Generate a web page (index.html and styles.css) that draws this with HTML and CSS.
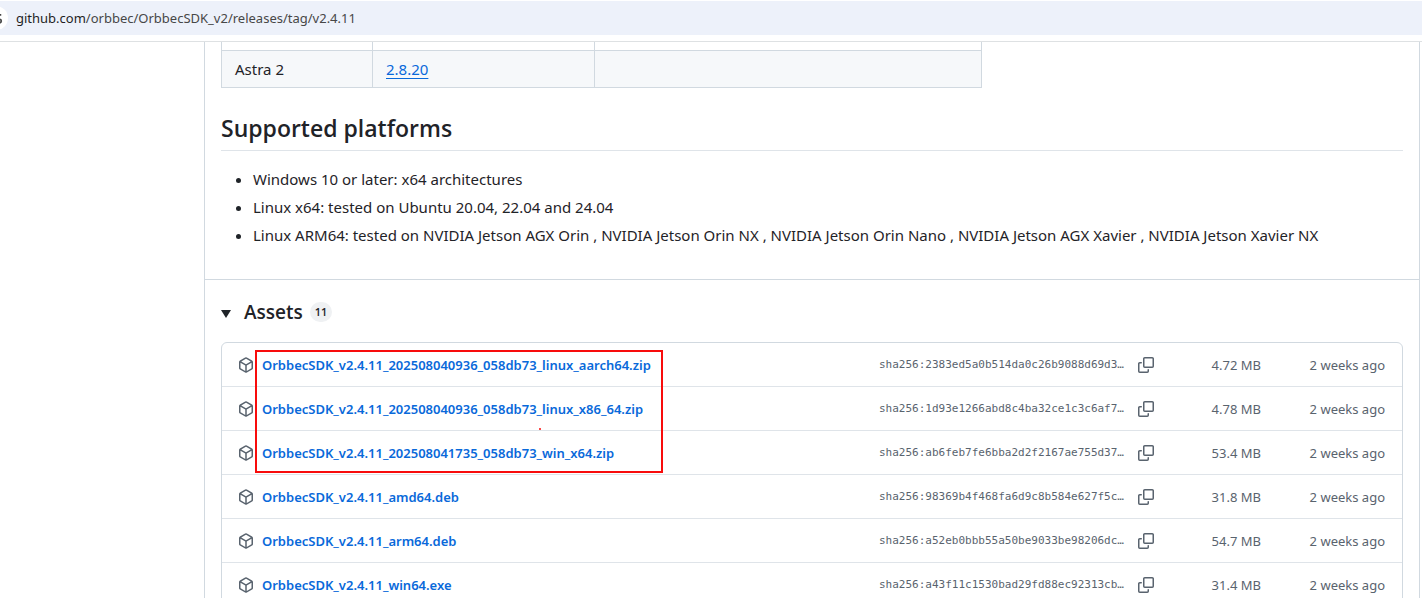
FILE: index.html
```
<!DOCTYPE html>
<html lang="en">
<head>
<meta charset="utf-8">
<title>Release v2.4.11 · orbbec/OrbbecSDK_v2</title>
<link rel="stylesheet" href="styles.css">
</head>
<body>
<svg class="defs" aria-hidden="true">
  <symbol id="package" viewBox="0 0 16 16"><path d="m8.878.392 5.25 3.045c.54.314.872.89.872 1.514v6.098a1.75 1.75 0 0 1-.872 1.514l-5.25 3.045a1.75 1.75 0 0 1-1.756 0l-5.25-3.045A1.75 1.75 0 0 1 1 11.049V4.951c0-.624.332-1.201.872-1.514L7.122.392a1.75 1.75 0 0 1 1.756 0ZM7.875 1.69l-4.63 2.685L8 7.133l4.755-2.758-4.63-2.685a.248.248 0 0 0-.25 0ZM2.5 5.677v5.372c0 .09.047.171.125.216l4.625 2.683V8.432Zm6.25 8.271 4.625-2.683a.25.25 0 0 0 .125-.216V5.677L8.75 8.432Z"/></symbol>
  <symbol id="copy" viewBox="0 0 16 16"><path d="M0 6.75C0 5.784.784 5 1.75 5h1.5a.75.75 0 0 1 0 1.5h-1.5a.25.25 0 0 0-.25.25v7.5c0 .138.112.25.25.25h7.5a.25.25 0 0 0 .25-.25v-1.5a.75.75 0 0 1 1.5 0v1.5A1.75 1.75 0 0 1 9.25 16h-7.5A1.75 1.75 0 0 1 0 14.25Z"/><path d="M5 1.75C5 .784 5.784 0 6.75 0h7.5C15.216 0 16 .784 16 1.75v7.5A1.75 1.75 0 0 1 14.25 11h-7.5A1.75 1.75 0 0 1 5 9.25Zm1.75-.25a.25.25 0 0 0-.25.25v7.5c0 .138.112.25.25.25h7.5a.25.25 0 0 0 .25-.25v-7.5a.25.25 0 0 0-.25-.25Z"/></symbol>
</svg>
<header class="browser-bar">
  <div class="address">
    <button class="site-info" aria-label="View site information"><svg viewBox="0 0 16 16" aria-hidden="true"><path d="M7 4.500h7M2 11.500h7"/><circle cx="4" cy="4.500" r="2"/><circle cx="12" cy="11.500" r="2"/></svg></button>
    <span class="url"><span class="host">github.com</span>/orbbec/OrbbecSDK_v2/releases/tag/v2.4.11</span>
  </div>
</header>
<main class="release">
  <section class="notes">
    <table class="firmware">
      <tbody>
        <tr class="cut"><td></td><td></td><td></td></tr>
        <tr class="alt"><td>Astra 2</td><td><a href="#">2.8.20</a></td><td></td></tr>
      </tbody>
    </table>
    <h2>Supported platforms</h2>
    <ul>
      <li>Windows 10 or later: x64 architectures</li>
      <li>Linux x64: tested on Ubuntu 20.04, 22.04 and 24.04</li>
      <li>Linux ARM64: tested on NVIDIA Jetson AGX Orin , NVIDIA Jetson Orin NX , NVIDIA Jetson Orin Nano , NVIDIA Jetson AGX Xavier , NVIDIA Jetson Xavier NX</li>
    </ul>
  </section>
  <details class="assets" open>
    <summary><svg class="caret" viewBox="0 0 10 8" aria-hidden="true"><path d="M0 0h10L5 8z"/></svg><span class="title">Assets</span><span class="counter">11</span></summary>
    <div class="list-wrap">
    <ul class="list">
      <li><svg class="icon"><use href="#package"/></svg><a href="#">OrbbecSDK_v2.4.11_202508040936_058db73_linux_aarch64.zip</a><span class="sha">sha256:2383ed5a0b514da0c26b9088d69d3…</span><button class="copy" aria-label="Copy"><svg class="icon"><use href="#copy"/></svg></button><span class="size">4.72 MB</span><span class="date">2 weeks ago</span></li>
      <li><svg class="icon"><use href="#package"/></svg><a href="#">OrbbecSDK_v2.4.11_202508040936_058db73_linux_x86_64.zip</a><span class="sha">sha256:1d93e1266abd8c4ba32ce1c3c6af7…</span><button class="copy" aria-label="Copy"><svg class="icon"><use href="#copy"/></svg></button><span class="size">4.78 MB</span><span class="date">2 weeks ago</span></li>
      <li><svg class="icon"><use href="#package"/></svg><a href="#">OrbbecSDK_v2.4.11_202508041735_058db73_win_x64.zip</a><span class="sha">sha256:ab6feb7fe6bba2d2f2167ae755d37…</span><button class="copy" aria-label="Copy"><svg class="icon"><use href="#copy"/></svg></button><span class="size">53.4 MB</span><span class="date">2 weeks ago</span></li>
      <li><svg class="icon"><use href="#package"/></svg><a href="#">OrbbecSDK_v2.4.11_amd64.deb</a><span class="sha">sha256:98369b4f468fa6d9c8b584e627f5c…</span><button class="copy" aria-label="Copy"><svg class="icon"><use href="#copy"/></svg></button><span class="size">31.8 MB</span><span class="date">2 weeks ago</span></li>
      <li><svg class="icon"><use href="#package"/></svg><a href="#">OrbbecSDK_v2.4.11_arm64.deb</a><span class="sha">sha256:a52eb0bbb55a50be9033be98206dc…</span><button class="copy" aria-label="Copy"><svg class="icon"><use href="#copy"/></svg></button><span class="size">54.7 MB</span><span class="date">2 weeks ago</span></li>
      <li><svg class="icon"><use href="#package"/></svg><a href="#">OrbbecSDK_v2.4.11_win64.exe</a><span class="sha">sha256:a43f11c1530bad29fd88ec92313cb…</span><button class="copy" aria-label="Copy"><svg class="icon"><use href="#copy"/></svg></button><span class="size">31.4 MB</span><span class="date">2 weeks ago</span></li>
    </ul>
    <div class="highlight"></div>
    <div class="speck"></div>
    </div>
  </details>
</main>
</body>
</html>
```
FILE: styles.css
```
* { box-sizing: border-box; }
html, body { height: 100%; }
body {
  margin: 0;
  display: flex;
  flex-direction: column;
  overflow: hidden;
  background: #fff;
  color: #1f2328;
  font: 15px/24px "Noto Sans", "Open Sans", sans-serif;
}
button { padding: 0; border: 0; background: none; display: flex; }
.defs { display: none; }

.browser-bar { flex: none; padding: 1px 0 6px; border-bottom: 1px solid #dee1e3; }
.address { display: flex; align-items: center; gap: 8px; height: 34px; background: #edf1fa; font-size: 13px; color: #474747; }
.site-info { width: 24px; height: 24px; margin-left: -16px; border-radius: 50%; background: #fff; align-items: center; justify-content: center; }
.site-info svg { width: 14px; height: 14px; fill: none; stroke: #474747; stroke-width: 2; }
.host { color: #1f1f1f; }

.release { flex: none; margin: 0 2px 0 204px; border: solid #d1d9e0; border-width: 0 1px; }
.notes { padding: 0 16px 32px; border-bottom: 1px solid #d1d9e0; }
.firmware { width: 761px; max-width: 100%; table-layout: fixed; border-collapse: collapse; }
.firmware td { height: 37px; padding: 6px 13px; border: 1px solid #d1d9e0; }
.firmware td:nth-child(1) { width: 151px; }
.firmware td:nth-child(2) { width: 222px; }
.firmware .cut td { height: 8px; padding: 0; border-top: 0; }
.firmware .alt { background: #f6f8fa; }
.firmware a { color: #0969da; text-underline-offset: 3px; }
h2 { margin: 24px 0 16px; padding-bottom: 6px; border-bottom: 1px solid #dfe4e9; font-family: "Open Sans", sans-serif; font-size: 23px; line-height: 32px; font-weight: 600; }
.notes ul { margin: 0; padding-left: 32px; }
.notes li + li { margin-top: 4px; }

.assets { padding: 16px; }
summary { display: flex; align-items: center; margin-bottom: 14px; font-family: "Open Sans", sans-serif; line-height: 32px; list-style: none; }
.caret { width: 10px; height: 8px; margin: 4px 13px 0 0; fill: #1f2328; }
.title { font-size: 19px; font-weight: 600; }
.counter { margin-left: 7px; padding: 0 5px; border-radius: 10px; background: #eff1f3; font-size: 11px; line-height: 20px; font-weight: 600; }
.list-wrap { position: relative; }
.list { margin: 0; padding: 0; list-style: none; border: 1px solid #d1d9e0; border-radius: 6px; }
.list li { display: flex; align-items: center; height: 44px; padding: 1px 17px 0 16px; border-bottom: 1px solid #dfe4e9; font-size: 13px; color: #59636e; }
.list li:last-child { padding-top: 0; border-bottom: 0; }
.icon { flex: none; width: 16px; height: 16px; fill: #59636e; }
.list a { flex: 1; margin-left: 8px; color: #0969da; font-weight: 600; text-decoration: none; }
.sha { font: 11px/20px "DejaVu Sans Mono", monospace; }
.copy { margin-left: 14px; }
.size { width: 107px; text-align: right; }
.date { width: 124px; text-align: right; }
.highlight { position: absolute; left: 34px; top: 8px; width: 408px; height: 123px; border: 2px solid #f80c0c; }
.speck { position: absolute; left: 318px; top: 86px; width: 2px; height: 2px; border-radius: 1px; background: #f80c0c; }
```
